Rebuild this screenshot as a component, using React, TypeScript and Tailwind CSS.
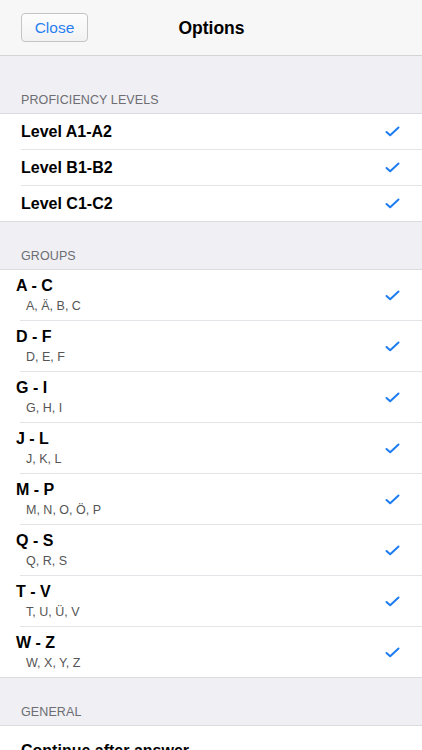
import React from "react";

const Check = () => (
  <svg width="15" height="11" viewBox="0 0 15 11" fill="none">
    <path d="M1.5 6 L5.2 9.3 L13.5 1.5" stroke="#1c7cf0" strokeWidth="2" strokeLinecap="round" strokeLinejoin="round" />
  </svg>
);

const levels = ["Level A1-A2", "Level B1-B2", "Level C1-C2"];
const groups: [string, string][] = [
  ["A - C", "A, Ä, B, C"],
  ["D - F", "D, E, F"],
  ["G - I", "G, H, I"],
  ["J - L", "J, K, L"],
  ["M - P", "M, N, O, Ö, P"],
  ["Q - S", "Q, R, S"],
  ["T - V", "T, U, Ü, V"],
  ["W - Z", "W, X, Y, Z"],
];

const SectionHeader = ({ title, h }: { title: string; h: string }) => (
  <div className={`${h} flex items-end px-[21px] pb-[5px]`}>
    <span className="text-[12.5px] leading-[16px] text-[#6d6d72] tracking-[0.1px]">{title}</span>
  </div>
);

export default function App() {
  return (
    <div
      className="w-[422px] h-[750px] overflow-hidden bg-[#efeff4]"
      style={{ fontFamily: '"Liberation Sans", Arial, sans-serif' }}
    >
      <div className="h-[56px] bg-[#f7f7f7] border-b border-[#d4d4d6] relative flex items-center">
        <button className="ml-[21px] w-[67px] h-[29px] rounded-[4px] border border-[#c4c4c6] bg-gradient-to-b from-[#fdfdfd] to-[#f2f2f2] text-[15.5px] text-[#2a7ff0] flex items-center justify-center">
          Close
        </button>
        <div className="absolute left-0 right-0 top-0 h-[56px] flex items-center justify-center pointer-events-none">
          <span className="text-[17.5px] font-bold text-black ml-[1px]">Options</span>
        </div>
      </div>

      <SectionHeader title="PROFICIENCY LEVELS" h="h-[57px]" />
      <div className="bg-white border-y border-[#dcdce0]">
        {levels.map((l, i) => (
          <div key={l} className="pl-[21px]">
            <div
              className={`flex items-center justify-between pr-[22px] ${
                i < levels.length - 1 ? "h-[36px] border-b border-[#e4e4e8]" : "h-[35px]"
              }`}
            >
              <span className="text-[16px] font-bold text-black">{l}</span>
              <Check />
            </div>
          </div>
        ))}
      </div>

      <SectionHeader title="GROUPS" h="h-[47px]" />
      <div className="bg-white border-y border-[#dcdce0]">
        {groups.map(([t, s], i) => (
          <div key={t} className="pl-[20px]">
            <div
              className={`flex items-center justify-between pr-[22px] ${
                i < groups.length - 1 ? "h-[51px] border-b border-[#e4e4e8]" : "h-[50px]"
              }`}
            >
              <div className="-ml-[4px] flex flex-col">
                <span className="text-[16px] leading-[20px] font-bold text-black">{t}</span>
                <span className="mt-[2px] ml-[10px] text-[12.5px] leading-[16px] text-[#555555]">{s}</span>
              </div>
              <Check />
            </div>
          </div>
        ))}
      </div>

      <SectionHeader title="GENERAL" h="h-[47px]" />
      <div className="bg-white border-t border-[#dcdce0]">
        <div className="pl-[21px] h-[50px] flex items-center">
          <span className="text-[16px] font-bold text-black">Continue after answer</span>
        </div>
      </div>
    </div>
  );
}
